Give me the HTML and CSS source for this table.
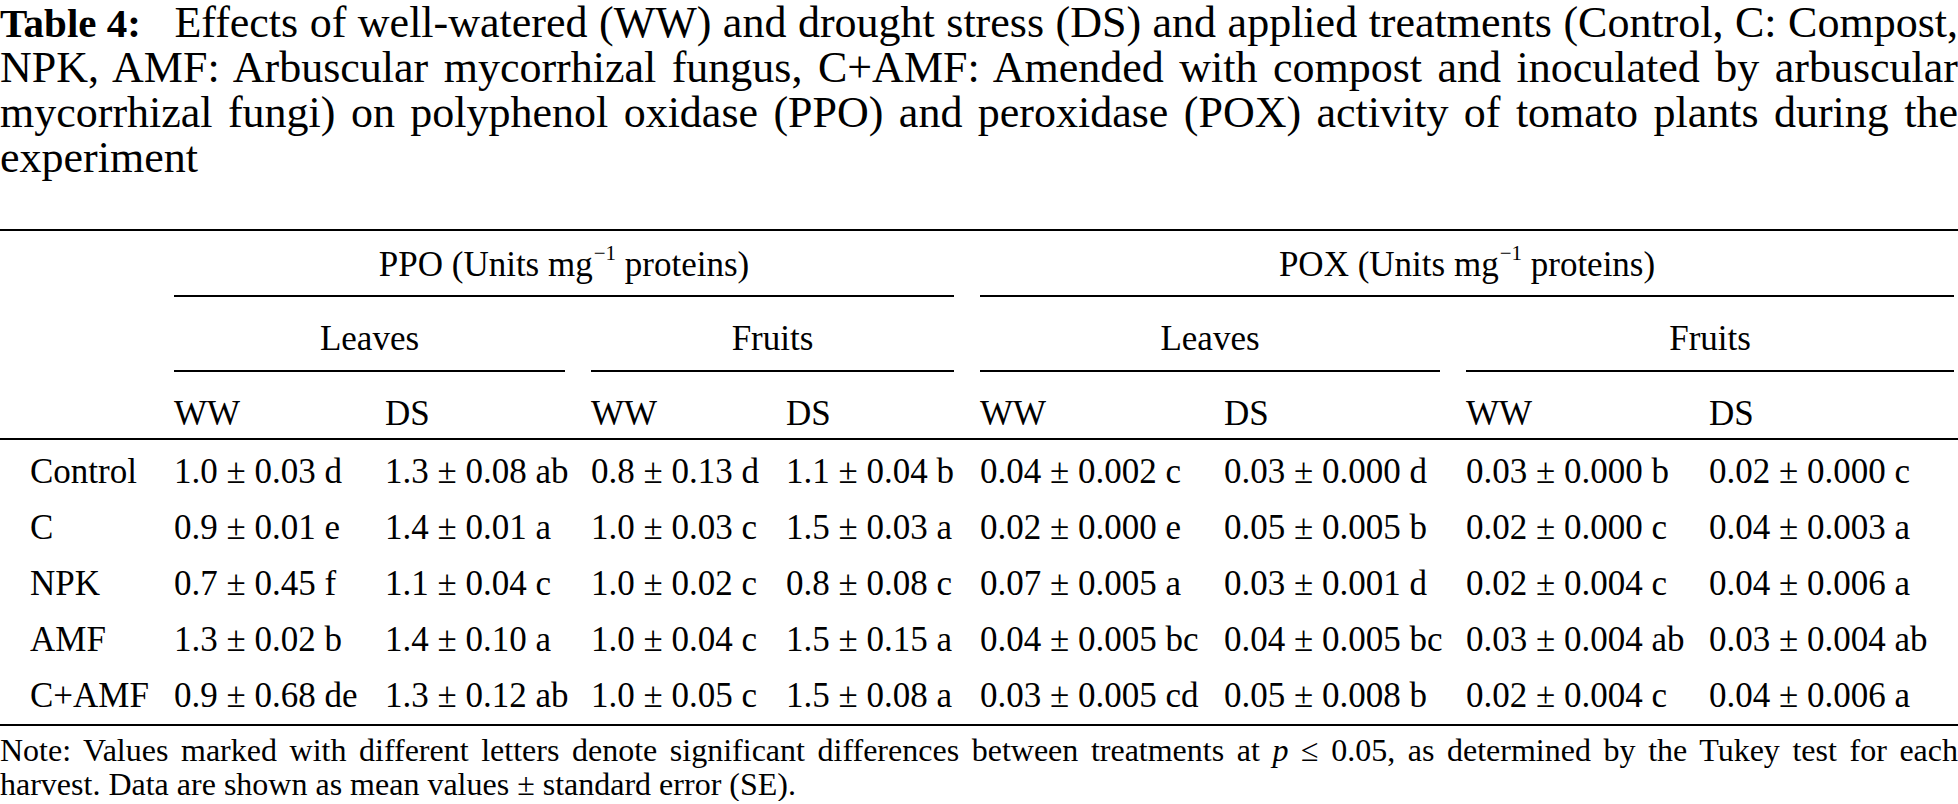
FILE: index.html
```html
<!DOCTYPE html>
<html lang="en">
<head>
<meta charset="utf-8">
<title>Table 4</title>
<link rel="stylesheet" href="styles.css">
</head>
<body>
<div class="page">
  <p class="caption"><b class="caption-label">Table 4:</b> Effects of well-watered (WW) and drought stress (DS) and applied treatments (Control, C: Compost, NPK, AMF: Arbuscular mycorrhizal fungus, C+AMF: Amended with compost and inoculated by arbuscular mycorrhizal fungi) on polyphenol oxidase (PPO) and peroxidase (POX) activity of tomato plants during the experiment</p>

  <table class="data">
    <colgroup>
      <col class="c-label">
      <col class="c1"><col class="c2"><col class="c3"><col class="c4">
      <col class="c5"><col class="c6"><col class="c7"><col class="c8">
    </colgroup>
    <thead>
      <tr class="r-enzyme">
        <th></th>
        <th colspan="4"><div class="span-rule">PPO (Units mg<sup>−1</sup> proteins)</div></th>
        <th colspan="4"><div class="span-rule end">POX (Units mg<sup>−1</sup> proteins)</div></th>
      </tr>
      <tr class="r-organ">
        <th></th>
        <th colspan="2"><div class="span-rule">Leaves</div></th>
        <th colspan="2"><div class="span-rule">Fruits</div></th>
        <th colspan="2"><div class="span-rule">Leaves</div></th>
        <th colspan="2"><div class="span-rule end">Fruits</div></th>
      </tr>
      <tr class="r-cond">
        <th></th>
        <th>WW</th><th>DS</th><th>WW</th><th>DS</th>
        <th>WW</th><th>DS</th><th>WW</th><th>DS</th>
      </tr>
    </thead>
    <tbody>
      <tr>
        <td class="label">Control</td>
        <td>1.0 ± 0.03 d</td><td>1.3 ± 0.08 ab</td><td>0.8 ± 0.13 d</td><td>1.1 ± 0.04 b</td>
        <td>0.04 ± 0.002 c</td><td>0.03 ± 0.000 d</td><td>0.03 ± 0.000 b</td><td>0.02 ± 0.000 c</td>
      </tr>
      <tr>
        <td class="label">C</td>
        <td>0.9 ± 0.01 e</td><td>1.4 ± 0.01 a</td><td>1.0 ± 0.03 c</td><td>1.5 ± 0.03 a</td>
        <td>0.02 ± 0.000 e</td><td>0.05 ± 0.005 b</td><td>0.02 ± 0.000 c</td><td>0.04 ± 0.003 a</td>
      </tr>
      <tr>
        <td class="label">NPK</td>
        <td>0.7 ± 0.45 f</td><td>1.1 ± 0.04 c</td><td>1.0 ± 0.02 c</td><td>0.8 ± 0.08 c</td>
        <td>0.07 ± 0.005 a</td><td>0.03 ± 0.001 d</td><td>0.02 ± 0.004 c</td><td>0.04 ± 0.006 a</td>
      </tr>
      <tr>
        <td class="label">AMF</td>
        <td>1.3 ± 0.02 b</td><td>1.4 ± 0.10 a</td><td>1.0 ± 0.04 c</td><td>1.5 ± 0.15 a</td>
        <td>0.04 ± 0.005 bc</td><td>0.04 ± 0.005 bc</td><td>0.03 ± 0.004 ab</td><td>0.03 ± 0.004 ab</td>
      </tr>
      <tr>
        <td class="label">C+AMF</td>
        <td>0.9 ± 0.68 de</td><td>1.3 ± 0.12 ab</td><td>1.0 ± 0.05 c</td><td>1.5 ± 0.08 a</td>
        <td>0.03 ± 0.005 cd</td><td>0.05 ± 0.008 b</td><td>0.02 ± 0.004 c</td><td>0.04 ± 0.006 a</td>
      </tr>
    </tbody>
  </table>

  <p class="note">Note: Values marked with different letters denote significant differences between treatments at <i class="var">p</i> ≤ 0.05, as determined by the Tukey test for each harvest. Data are shown as mean values ± standard error (SE).</p>
</div>
</body>
</html>
```

FILE: styles.css
```css
html, body {
  margin: 0;
  padding: 0;
  background: #ffffff;
}

body {
  font-family: "Liberation Serif", "Times New Roman", serif;
  color: #000000;
}

.page {
  width: 1958px;
}

.caption {
  margin: 0 0 49px 0;
  font-size: 44px;
  line-height: 45px;
  text-align: justify;
}

.caption-label {
  display: inline-block;
  font-weight: bold;
  font-size: 41px;
  line-height: 36px;
  margin-right: 22px;
}

.data {
  width: 1958px;
  table-layout: fixed;
  border-collapse: collapse;
  border-top: 2px solid #000;
  border-bottom: 2px solid #000;
  font-size: 35px;
  line-height: 40px;
}

.c-label { width: 174px; }
.c1 { width: 211px; }
.c2 { width: 206px; }
.c3 { width: 195px; }
.c4 { width: 194px; }
.c5 { width: 244px; }
.c6 { width: 242px; }
.c7 { width: 243px; }
.c8 { width: 249px; }

.data th {
  font-weight: normal;
  text-align: left;
  padding: 0;
  white-space: nowrap;
}

.data thead {
  border-bottom: 2px solid #000;
}

.span-rule {
  margin-right: 26px;
  text-align: center;
  border-bottom: 2px solid #000;
}

.span-rule.end {
  margin-right: 4px;
}

.r-enzyme th { vertical-align: bottom; }
.r-enzyme .span-rule { padding: 14px 0 10px; }

.r-organ th { vertical-align: bottom; }
.r-organ .span-rule { padding: 22px 0 11px; }

.r-cond th {
  padding-top: 22px;
  padding-bottom: 4px;
}

.data sup {
  font-size: 0.6em;
  line-height: 0;
  vertical-align: 0.75em;
  margin-left: 1px;
}

.data td {
  padding: 8px 0;
  white-space: nowrap;
}

.data tbody tr:first-child td {
  padding-top: 12px;
}

.data td.label {
  padding-left: 30px;
}

.note {
  margin: 7px 0 0 0;
  font-size: 32px;
  line-height: 34px;
  text-align: justify;
}

.var {
  display: inline-block;
  line-height: 28px;
}
```
